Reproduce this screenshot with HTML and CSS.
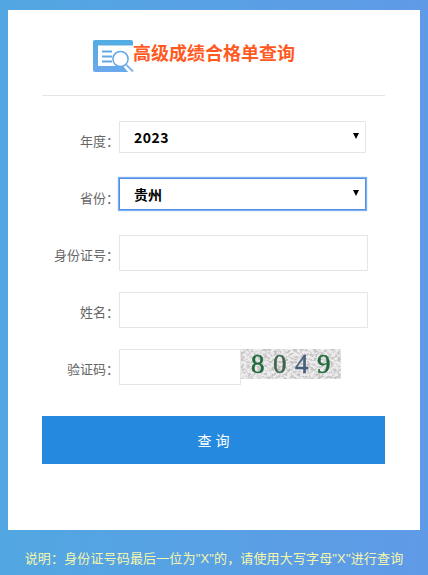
FILE: index.html
```html
<!DOCTYPE html>
<html>
<head>
<meta charset="utf-8" />
<title>高级成绩合格单查询</title>
<link rel="stylesheet" href="styles.css">
</head>

<body>
<div class="card">
  <div class="head">
    <svg class="head-icon" width="42" height="34" viewBox="0 0 42 34">
      <defs>
        <linearGradient id="iconBg" x1="0" y1="0" x2="0" y2="1">
          <stop offset="0" stop-color="#52ace2" />
          <stop offset="1" stop-color="#6aa9ec" />
        </linearGradient>
      </defs>
      <rect x="0" y="0" width="40" height="32" rx="2" fill="url(#iconBg)" />
      <path d="M5 5.500h35v20.500H5z" fill="#fff" />
      <path d="M9 11.500h10M9 16.500h10M9 21.500h10" stroke="#62a8e4" stroke-width="2.200" fill="none" />
      <path d="M29 25l7 8h6v-6l-6-6z" fill="#fff" />
      <circle cx="27.500" cy="19" r="7.600" fill="#fff" stroke="#62a8e4" stroke-width="1.500" />
      <path d="M33.500 25l6.500 6.500" stroke="#7db6ea" stroke-width="2" fill="none" />
    </svg>
    <h1 class="head-title">高级成绩合格单查询</h1>
  </div>
  <form class="form">
    <div class="row">
      <label class="row-label">年度：</label>
      <div class="select-box">
        <select class="select select-year"><option>2023</option></select>
      </div>
    </div>
    <div class="row">
      <label class="row-label">省份：</label>
      <div class="select-box">
        <select class="select select-on"><option>贵州</option></select>
      </div>
    </div>
    <div class="row">
      <label class="row-label">身份证号：</label>
      <input type="text" class="text" />
    </div>
    <div class="row">
      <label class="row-label">姓名：</label>
      <input type="text" class="text" />
    </div>
    <div class="row">
      <label class="row-label">验证码：</label>
      <input type="text" class="text text-code" />
      <svg class="code" width="100" height="30" viewBox="0 0 100 30">
        <defs>
          <filter id="speckle" x="0" y="0" width="100%" height="100%">
            <feTurbulence type="fractalNoise" baseFrequency="0.3 0.4" numOctaves="2" seed="7" />
            <feColorMatrix type="matrix" values="0 0 0 0 0.55  0 0 0 0 0.54  0 0 0 0 0.54  4 0 0 0 -1.700" />
          </filter>
          <filter id="soft"><feGaussianBlur stdDeviation="0.4" /></filter>
        </defs>
        <rect width="100" height="30" fill="#eeeced" />
        <rect width="100" height="30" filter="url(#speckle)" />
        <g filter="url(#soft)">
          <text class="code-num code-g" x="10" y="24">8</text>
          <text class="code-num code-d" x="32" y="24">0</text>
          <text class="code-num code-b" x="54" y="24">4</text>
          <text class="code-num code-g" x="76" y="24">9</text>
        </g>
      </svg>
    </div>
    <input type="button" class="btn" value="查 询" />
  </form>
</div>
<p class="note">说明：身份证号码最后一位为"X"的，请使用大写字母"X"进行查询</p>
</body>
</html>
```

FILE: styles.css
```css
*{margin:0px; padding:0px; box-sizing:border-box;}
html,body{height:100%;}
body{
	background:linear-gradient(90deg,#52a7e2,#5f9ae7);
	font-family:"Liberation Sans","Noto Sans CJK SC",sans-serif;
	padding:10px 8px 0;
	overflow:hidden;
}
.card{
	height:520px;
	background-color:#fff;
	padding:0 35px 0 34px;
}
.head{
	display:flex;
	align-items:flex-start;
	height:86px;
	padding:30px 0 0 51px;
	border-bottom:1px solid #e6e6e6;
}
.head-icon{
	flex:none;
	margin-right:-2px;
}
.head-title{
	font-size:18px;
	line-height:26px;
	margin-top:1px;
	font-weight:bold;
	color:#ff5a1f;
}
/*****************************************/
.form{
	padding-top:25px;
}
.row{
	display:flex;
	align-items:flex-start;
	height:57px;
}
.row-label{
	width:77px;
	padding:11px 0 0 0;
	font-size:13px;
	line-height:20px;
	color:#666;
	text-align:right;
	white-space:nowrap;
}
.select-box{
	position:relative;
	width:247px;
	height:32px;
}
.select-box::after{
	content:"";
	position:absolute;
	top:12px;
	right:7px;
	border-left:3px solid transparent;
	border-right:3px solid transparent;
	border-top:6px solid #000;
}
.select{
	display:block;
	width:100%;
	height:100%;
	appearance:none;
	border:1px solid #e6e6e6;
	background:#fff;
	padding-left:14px;
	font-family:"Noto Sans CJK SC",sans-serif;
	font-size:14px;
	font-weight:bold;
	color:#000;
	outline:none;
}
.select-year{
	letter-spacing:0.5px;
}
.select-on{
	border-color:#4b8fe8;
	box-shadow:0 0 1px 1px #7fb0f0;
}
.text{
	display:block;
	width:249px;
	height:36px;
	border:1px solid #e6e6e6;
	background:#fff;
	outline:none;
}
.text-code{
	width:122px;
}
.code{
	display:block;
	flex:none;
}
.code-num{
	font-family:"Liberation Serif",serif;
	font-size:27px;
	stroke-width:0.5px;
}
.code-g{fill:#1f6a3c; stroke:#1f6a3c;}
.code-d{fill:#3f6650; stroke:#3f6650;}
.code-b{fill:#46607e; stroke:#46607e;}
.btn{
	display:block;
	width:100%;
	height:48px;
	margin-top:10px;
	border:none;
	background-color:#2589e0;
	color:#fff;
	font-family:"Liberation Sans","Noto Sans CJK SC",sans-serif;
	font-size:14px;
	cursor:pointer;
}
/******************************************/
.note{
	margin-top:20px;
	font-size:13px;
	letter-spacing:0.15px;
	line-height:18px;
	color:#f4f6ae;
	text-align:center;
	white-space:nowrap;
}
```
